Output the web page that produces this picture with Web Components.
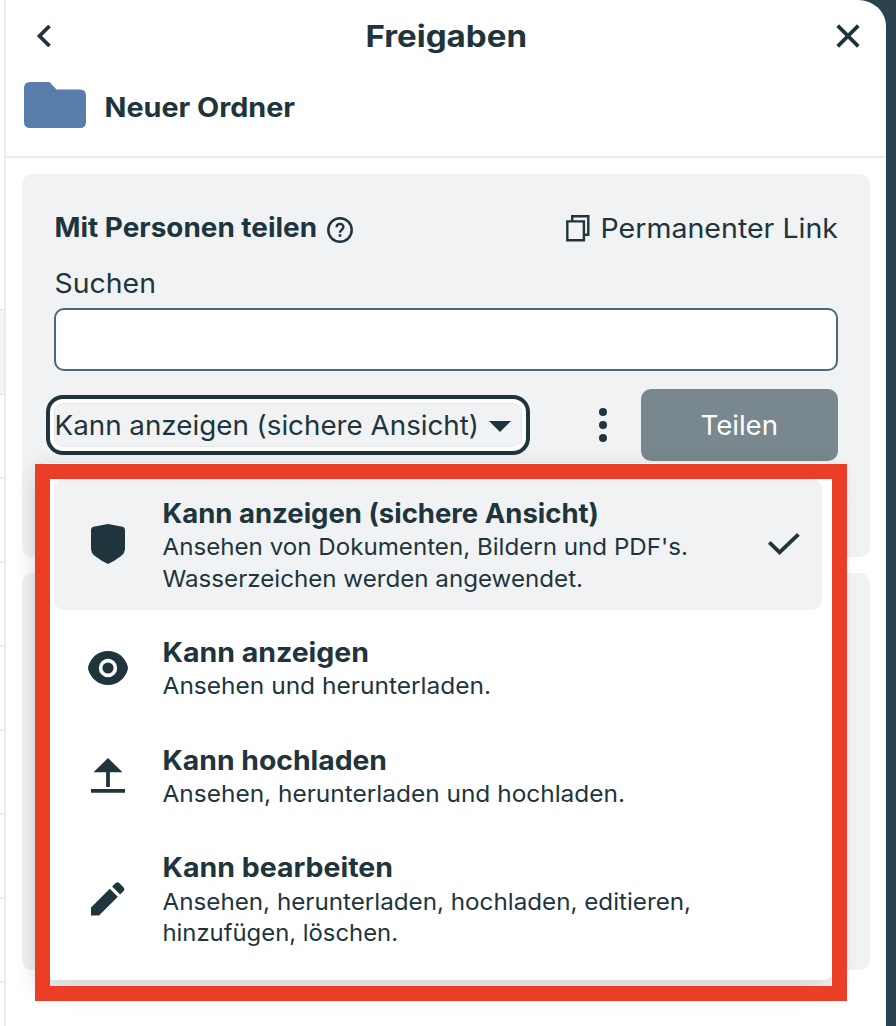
<!DOCTYPE html>
<html lang="de">
<head>
<meta charset="utf-8">
<title>Freigaben</title>
<style>
html,body{margin:0;height:1026px;overflow:hidden;background:#2a424e;font-family:Inter,"Noto Sans",sans-serif;color:#20343d}
</style>
</head>
<body>
<share-app></share-app>
<script>
const define = (name, html, setup) => customElements.define(name, class extends HTMLElement {
  connectedCallback() {
    if (this.shadowRoot) return;
    const t = document.createElement('template');
    t.innerHTML = html;
    this.attachShadow({mode: 'open'}).append(t.content.cloneNode(true));
    if (setup) setup(this, this.shadowRoot);
  }
});

/* One line of text, widened so that it spans its "w" attribute. */
define('text-line', `<style>
:host{display:block;white-space:pre;flex:none;font-size:27px;line-height:36px}
:host([bold]){font-weight:700}
:host([small]){font-size:23.5px;line-height:32px}
span{display:inline-block;transform-origin:0 50%}
</style><span><slot></slot></span>`, (host, root) => {
  const span = root.querySelector('span'), w = +host.getAttribute('w');
  host.style.width = w + 'px';
  span.style.transform = `translateX(.5px) scaleX(${((w - 1.5) / span.getBoundingClientRect().width).toFixed(4)})`;
});

const icons = {
  back: ['0 0 20 24', '<path d="M14.5 2 4.5 12l10 10" fill="none" stroke="currentColor" stroke-width="3.8"/>'],
  close: ['0 0 24 24', '<path d="M1.7 1.7 22.3 22.3M22.3 1.7 1.7 22.3" fill="none" stroke="currentColor" stroke-width="3.8"/>'],
  folder: ['0 0 62 46', '<path d="M6 0H25.5L32.5 7.5H56Q62 7.5 62 13.5V40Q62 46 56 46H6Q0 46 0 40V6Q0 0 6 0Z" fill="#587dab"/>'],
  help: ['0 0 26 26', '<circle cx="13" cy="13" r="11.7" fill="none" stroke="currentColor" stroke-width="2.5"/><path d="M9.6 10.2C9.6 5.8 16.4 5.8 16.4 10C16.4 12.5 13 12.7 13 15.8" fill="none" stroke="currentColor" stroke-width="2.4"/><rect x="11.7" y="17.2" width="2.6" height="2.6" fill="currentColor"/>'],
  copy: ['0 0 24 27', '<path d="M6.2 6.4V1.3H22.3V19.7H17.9M1.3 6.4H17.9V25.2H1.3Z" fill="none" stroke="currentColor" stroke-width="2.4"/>'],
  caret: ['0 0 22 11', '<path d="M0 0H22L11 11Z" fill="currentColor"/>'],
  more: ['0 0 8 34', '<g fill="currentColor"><circle cx="4" cy="4" r="4"/><circle cx="4" cy="17" r="4"/><circle cx="4" cy="30" r="4"/></g>'],
  shield: ['0 0 34 40', '<path d="M17 0 31.5 2.7Q34 3.2 34 6V24Q34 29.3 30 32Q23 37.5 17 40Q11 37.5 4 32Q0 29.3 0 24V6Q0 3.2 2.5 2.7Z" fill="currentColor"/>'],
  eye: ['0 0 40 34', '<path d="M20 0C30 0 37 6.5 39.7 15.2Q40.2 17 39.7 18.8C37 27.5 30 34 20 34C10 34 3 27.5 .3 18.8Q-.2 17 .3 15.2C3 6.5 10 0 20 0Z" fill="currentColor"/><circle cx="20" cy="17" r="7.4" fill="none" stroke="#fff" stroke-width="3.6"/>'],
  upload: ['0 0 34 35', '<path d="M17 0 31.5 14.3H18.9V29H15.1V14.3H2.5ZM0 30.9H34V34.7H0Z" fill="currentColor"/>'],
  pencil: ['0 0 34 34', '<path d="M0 25.6 18.8 6.8 26.8 14.8 8 33.6H0ZM21.1 4.6 24.8.9Q26.5-.5 28.2.9L32.7 5.4Q34.2 7.1 32.8 8.8L29.1 12.5Z" fill="currentColor"/>'],
  check: ['0 0 32 22', '<path d="M1.3 9.4 11.6 19.4 30.4 1.3" fill="none" stroke="currentColor" stroke-width="3.9"/>']
};
define('ui-icon', `<style>:host{display:block;flex:none}svg{display:block;overflow:visible}</style>`, (host, root) => {
  const [box, body] = icons[host.getAttribute('name')];
  const [, , w, h] = box.split(' ');
  root.innerHTML += `<svg width="${w}" height="${h}" viewBox="${box}">${body}</svg>`;
});

define('page-edge', `<style>
:host{display:block;flex:none;width:4px;height:1026px;background:#fff;border-right:2px solid #ececed}
div{height:82px;border-top:2px solid #ececed}
.first{height:309px;border:0}
.sel{background:#f2f3f5}
</style><div class="first"></div><div class="sel"></div><div></div><div></div><div></div><div></div><div></div><div></div><div></div><div></div>`);

define('panel-header', `<style>
:host{display:block;height:156px;border-bottom:2px solid #ececed}
.bar{display:flex;justify-content:space-between;align-items:center;height:72px;padding:0 26px 0 29px}
.res{display:flex;align-items:center;padding:10px 0 0 17.5px;gap:18px}
.res ::slotted(*){padding-top:5px}
</style>
<div class="bar"><ui-icon name="back"></ui-icon><slot name="title"></slot><ui-icon name="close"></ui-icon></div>
<div class="res"><ui-icon name="folder"></ui-icon><slot></slot></div>`);

define('permission-select', `<style>
:host{display:flex;align-items:center;box-sizing:border-box;width:484px;height:60px;border:4px solid #20343d;border-radius:17px;background:#fff;padding:4px}
div{display:flex;align-items:center;width:468px;height:44px;background:#f1f2f4;border-radius:10px;box-shadow:inset 0 0 0 .5px #dcdfe1;gap:9px}
ui-icon{padding-top:2px}
</style><div><slot></slot><ui-icon name="caret"></ui-icon></div>`);

define('share-form', `<style>
:host{display:block;box-sizing:border-box;width:848px;height:383px;margin:16px 0 0 16px;padding:36px 32px 0;border-radius:10px;background:#f1f2f4}
.row{display:flex;align-items:center}
.top{height:36px}
.input{box-sizing:border-box;height:63px;margin-top:6px;border:2px solid #456b78;border-radius:10px;background:#fff}
.actions{height:72px;margin:18px 0 0 -8px}
.actions text-line{padding-top:2px}
.btn{display:flex;align-items:center;justify-content:center;width:197px;height:72px;border-radius:10px;background:#78888e;color:#fff;margin-left:34px}
</style>
<div class="row top"><text-line bold w="264">Mit Personen teilen</text-line><ui-icon name="help" style="margin:4px 0 0 9px"></ui-icon>
<ui-icon name="copy" style="margin:1px 0 0 auto"></ui-icon><text-line w="239" style="margin:2px -1px 0 10px">Permanenter Link</text-line></div>
<div style="height:56px;display:flex;align-items:flex-end"><text-line w="103">Suchen</text-line></div>
<div class="input"></div>
<div class="row actions"><permission-select><text-line w="426">Kann anzeigen (sichere Ansicht)</text-line></permission-select>
<ui-icon name="more" style="margin-left:69px"></ui-icon><div class="btn"><text-line w="79">Teilen</text-line></div></div>`);

define('share-list', `<style>:host{display:block;width:848px;height:397px;margin:16px 0 0 16px;border-radius:10px;background:#f1f2f4}</style>`);

define('role-item', `<style>
:host{display:flex;align-items:center;box-sizing:border-box;width:768px;border-radius:10px}
:host([selected]){background:#f1f2f4}
.icon{display:flex;justify-content:center;width:108px;flex:none;padding-bottom:2px}
.check{margin-left:auto;padding:0 22px 2px 0}
</style><div class="icon"><slot name="icon"></slot></div><div><slot></slot></div><div class="check"><slot name="check"></slot></div>`);

define('role-menu', `<style>
:host{position:absolute;left:38px;top:463px;width:796px;height:517px;box-sizing:border-box;padding:16px 12px 0 16px;border-radius:10px;background:#fff;box-shadow:0 8px 24px rgba(0,0,0,.2)}
</style>
<role-item selected style="height:131px"><ui-icon slot="icon" name="shield"></ui-icon>
<text-line bold w="438" style="padding-top:1px;margin-bottom:-1px">Kann anzeigen (sichere Ansicht)</text-line><text-line small w="527">Ansehen von Dokumenten, Bildern und PDF's.</text-line><text-line small w="422">Wasserzeichen werden angewendet.</text-line>
<ui-icon slot="check" name="check"></ui-icon></role-item>
<role-item style="height:108px;margin-top:5px"><ui-icon slot="icon" name="eye"></ui-icon>
<text-line bold w="208">Kann anzeigen</text-line><text-line small w="330" style="margin:-1px 0 1px">Ansehen und herunterladen.</text-line></role-item>
<role-item style="height:108px"><ui-icon slot="icon" name="upload" style="padding-bottom:2px"></ui-icon>
<text-line bold w="226">Kann hochladen</text-line><text-line small w="464" style="margin:-1px 0 1px">Ansehen, herunterladen und hochladen.</text-line></role-item>
<role-item style="height:138px"><ui-icon slot="icon" name="pencil"></ui-icon>
<text-line bold w="232">Kann bearbeiten</text-line><text-line small w="530">Ansehen, herunterladen, hochladen, editieren,</text-line><text-line small w="237" style="margin:-1px 0 1px">hinzufügen, löschen.</text-line></role-item>`);

define('highlight-frame', `<style>:host{position:absolute;left:35px;top:464px;width:782px;height:507px;border:15px solid #ea3f26}</style>`);

define('share-app', `<style>
:host{display:flex;position:relative;width:896px;height:1026px;overflow:hidden}
.panel{width:880px;height:1026px;background:#fff;border-top-right-radius:28px 26px}
</style>
<page-edge></page-edge>
<div class="panel"><panel-header><text-line slot="title" bold w="163" style="margin-left:1px;font-size:30px;padding-bottom:1px">Freigaben</text-line><text-line bold w="192">Neuer Ordner</text-line></panel-header><share-form></share-form><share-list></share-list></div>
<role-menu></role-menu><highlight-frame></highlight-frame>`);
</script>
</body>
</html>
